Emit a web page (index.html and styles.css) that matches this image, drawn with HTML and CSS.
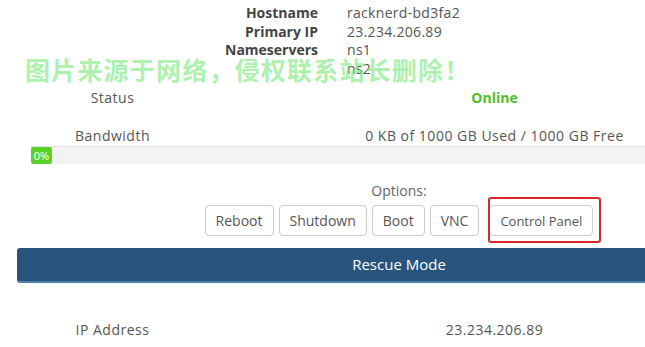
FILE: index.html
```html
<!DOCTYPE html>
<html lang="en">
<head>
<meta charset="utf-8">
<title>VPS Details</title>
<link rel="stylesheet" href="styles.css">
</head>
<body>
<div class="watermark">图片来源于网络，侵权联系站长删除！</div>
<main class="panel">
  <dl class="info">
    <dt>Hostname</dt><dd>racknerd-bd3fa2</dd>
    <dt>Primary IP</dt><dd>23.234.206.89</dd>
    <dt>Nameservers</dt><dd>ns1</dd>
    <dt></dt><dd>ns2</dd>
  </dl>
  <div class="stat-row status-row">
    <span>Status</span>
    <span class="online">Online</span>
  </div>
  <div class="stat-row bw-row">
    <span>Bandwidth</span>
    <span>0 KB of 1000 GB Used / 1000 GB Free</span>
  </div>
  <div class="progress">
    <div class="progress-bar">0%</div>
  </div>
  <div class="options">
    <div class="options-title">Options:</div>
    <div class="btns">
      <button class="btn">Reboot</button>
      <button class="btn">Shutdown</button>
      <button class="btn">Boot</button>
      <button class="btn">VNC</button>
      <span class="highlight"><button class="btn btn-small">Control Panel</button></span>
    </div>
  </div>
  <div class="rescue">Rescue Mode</div>
  <div class="stat-row ip-row">
    <span>IP Address</span>
    <span>23.234.206.89</span>
  </div>
</main>
</body>
</html>
```
FILE: styles.css
```css
html, body {
  margin: 0;
  padding: 0;
  background: #fff;
  overflow: hidden;
}
body {
  font-family: "Open Sans", "Liberation Sans", sans-serif;
  font-size: 14px;
  color: #555;
  position: relative;
}
.watermark {
  position: absolute;
  left: 25px;
  top: 54px;
  font-family: "Noto Sans CJK SC", sans-serif;
  font-weight: 700;
  font-size: 25px;
  line-height: 30px;
  letter-spacing: 1.2px;
  color: rgba(120, 232, 120, 0.62);
  white-space: nowrap;
  z-index: 2;
}
.panel {
  margin-left: 17px;
  width: 764px;
}
.info {
  display: grid;
  grid-template-columns: 301px 1fr;
  column-gap: 29px;
  margin: 0;
  padding-top: 4px;
  line-height: 18.5px;
}
.info dt {
  text-align: right;
  font-weight: 700;
  color: #444;
}
.info dd {
  margin: 0;
  color: #555;
  letter-spacing: 0.3px;
}
.stat-row {
  display: grid;
  grid-template-columns: 1fr 3fr;
  text-align: center;
  line-height: 20px;
  letter-spacing: 0.5px;
}
.status-row { margin-top: 10px; }
.bw-row { margin-top: 18px; }
.ip-row { margin-top: 37px; }
.online {
  color: #4fc02a;
  font-weight: 700;
  letter-spacing: 0;
}
.progress {
  margin-left: 14px;
  height: 18px;
  background: #f3f3f3;
  border-top: 1px solid #e3e3e3;
  box-sizing: border-box;
  display: flex;
}
.progress-bar {
  width: 21px;
  background: #5bd22a;
  color: #fff;
  font-size: 11px;
  line-height: 17px;
  text-align: center;
  border-radius: 2px;
}
.options {
  text-align: center;
}
.options-title {
  margin-top: 17px;
  line-height: 20px;
  color: #666;
}
.btns {
  margin-top: 4px;
  display: flex;
  justify-content: center;
  gap: 5px;
}
.btn {
  height: 31px;
  padding: 0 10px;
  background: #fff;
  border: 1px solid #ccc;
  border-radius: 4px;
  font-family: inherit;
  font-size: 14px;
  color: #555;
}
.btn-small {
  font-size: 13px;
}
.highlight {
  position: relative;
  margin-left: 5px;
  display: flex;
}
.highlight::after {
  content: "";
  position: absolute;
  left: -1px;
  right: -8px;
  top: -8px;
  bottom: -7px;
  border: 2px solid #d42a2a;
  border-radius: 3px;
}
.rescue {
  margin-top: 12px;
  height: 35px;
  box-sizing: border-box;
  background: #27547c;
  border-bottom: 2px solid #4c80ab;
  border-radius: 3px;
  color: #fff;
  font-size: 15px;
  line-height: 33px;
  text-align: center;
}
```
